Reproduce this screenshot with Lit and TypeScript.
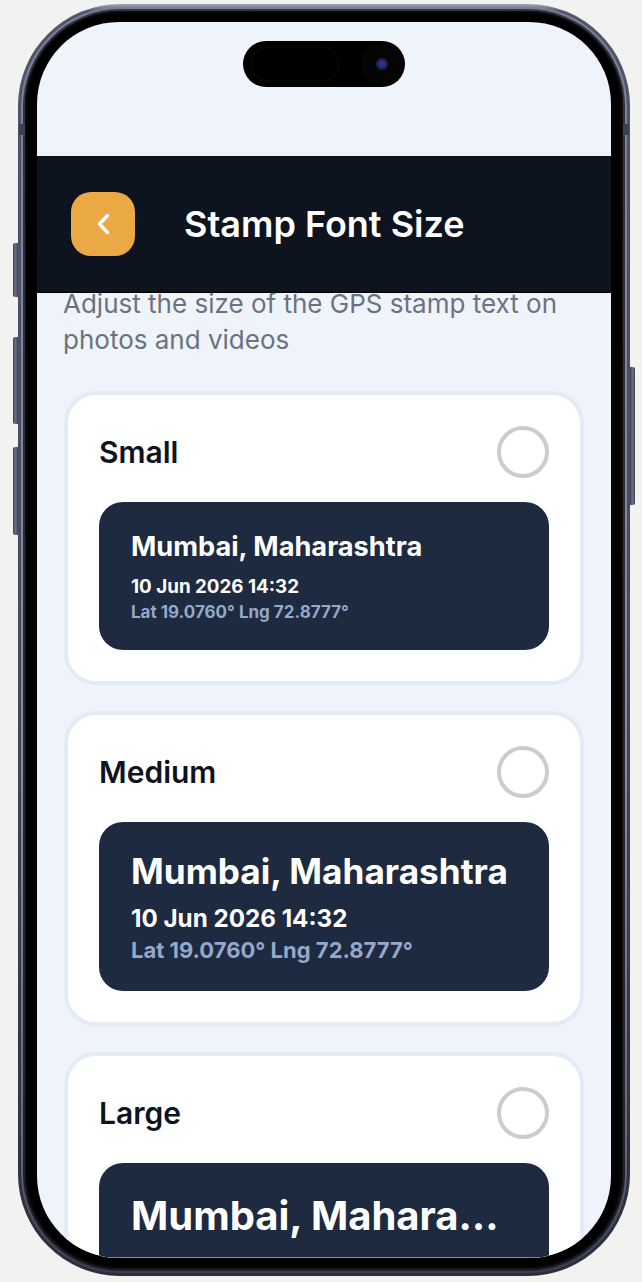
import { LitElement, html, css } from "lit";
import { customElement } from "lit/decorators.js";

const SIZES = [
  { label: "Small", cls: "s" },
  { label: "Medium", cls: "m" },
  { label: "Large", cls: "l" },
];

@customElement("app-root")
export class AppRoot extends LitElement {
  static styles = css`
    :host { display: block; width: 642px; height: 1282px; background: #f2f2f0; overflow: hidden; font-family: Inter, "Noto Sans", sans-serif; }
    .stage { box-sizing: border-box; height: 1282px; padding: 4px 12px 6px 18px; }
    .phone { position: relative; box-sizing: border-box; height: 1272px; padding: 3px; border-radius: 102px;
      background: linear-gradient(180deg, #a4a7b3 0, #50556a 0.6%, #454a5c 50%, #2a2e3d 100%); }
    .metal { box-sizing: border-box; height: 100%; padding: 2px; border-radius: 99px;
      background: linear-gradient(180deg, #7b8098 0, #858aa2 60%, #626779 90%, #3a3e4f 100%); }
    .metal2 { box-sizing: border-box; height: 100%; padding: 2px; border-radius: 97px; background: linear-gradient(180deg, #33363f, #282a33 50%, #1f2129); }
    .bezel { box-sizing: border-box; height: 100%; padding: 11px 12px 11px 12px; border-radius: 95px; background: #000; box-shadow: inset 0 0 3px 1px #16171b; }
    .screen { position: relative; height: 100%; border-radius: 82px; background: #eff4fb; overflow: hidden; display: flex; flex-direction: column; }
    .screen::after { content: ""; position: absolute; left: 60px; right: 60px; bottom: 0; height: 1px; background: #8b8f98; z-index: 3; }
    .btn { position: absolute; width: 5px; border-radius: 2px 0 0 2px; background: linear-gradient(90deg, #3b3f50, #6b7086 50%, #3f4355); }
    .b1 { left: -5px; top: 239px; height: 54px; }
    .b2 { left: -5px; top: 333px; height: 87px; }
    .b3 { left: -5px; top: 443px; height: 88px; }
    .b4 { right: -5px; top: 363px; height: 138px; border-radius: 0 2px 2px 0; }
    .band { position: absolute; width: 6px; height: 11px; background: #3c4152; top: 120px; }
    .band.l { left: 1px; } .band.r { right: 1px; }
    .island { position: absolute; left: 206px; top: 19px; width: 162px; height: 46px; border-radius: 23px; background: #000; display: flex; justify-content: space-between; align-items: center; padding: 0 2px 0 7px; box-sizing: border-box; z-index: 2; }
    .sensor { box-sizing: border-box; width: 90px; height: 36px; border-radius: 18px; border: 2px solid #070707; }
    .cam { width: 42px; height: 42px; border-radius: 50%; background: #050505; display: flex; align-items: center; justify-content: center; }
    .lens { width: 12px; height: 12px; border-radius: 50%; background: radial-gradient(circle, #3a35a0 0, #1b2a5a 50%, #05060f 100%); }
    .top { flex: none; height: 134px; }
    .header { flex: none; position: relative; z-index: 1; box-sizing: border-box; height: 137px; display: flex; align-items: center; gap: 49px; padding: 0 34px; background: #0e141f; border-bottom: 1px solid #000; }
    .back { width: 64px; height: 64px; border-radius: 20px; background: #eba945; display: flex; align-items: center; justify-content: center; }
    .back svg { width: 28px; height: 28px; fill: none; stroke: #fff; stroke-width: 3.5; stroke-linecap: round; stroke-linejoin: round; }
    h1 { margin: 0; color: #fff; font-size: 36px; font-weight: 600; letter-spacing: 0; }
    .body { flex: 1; min-height: 0; margin-top: -7px; padding: 0 27px; }
    .sub { margin: 0 0 33px -1px; color: #6b7280; font-size: 26px; line-height: 36px; font-weight: 400; }
    .card { box-sizing: border-box; margin-bottom: 26px; padding: 31px; background: #fff; border: 4px solid #e3ebf8; border-radius: 32px; }
    .row { display: flex; align-items: center; justify-content: space-between; margin-bottom: 24px; }
    .label { color: #0e141f; font-size: 30px; font-weight: 600; }
    .radio { box-sizing: border-box; width: 52px; height: 52px; border-radius: 50%; border: 4px solid #ccc; }
    .stamp { box-sizing: border-box; padding: 32px; border-radius: 24px; background: #1e2a40; }
    .name { color: #fff; font-weight: 700; white-space: nowrap; }
    .date { color: #fff; font-weight: 700; }
    .coord { color: #94a8c9; font-weight: 700; }
    .s .name { font-size: 27.2px; line-height: 26px; margin-bottom: 16px; }
    .s .date { font-size: 18.8px; line-height: 22px; }
    .s .coord { font-size: 17px; line-height: 28px; }
    .s.stamp { height: 148px; padding-top: 32px; }
    .m .name { font-size: 35.2px; line-height: 35px; margin-bottom: 16px; }
    .m .date { font-size: 24.2px; line-height: 28px; margin-bottom: 3px; }
    .m .coord { font-size: 22px; line-height: 28px; }
    .m.stamp { height: 169px; padding-top: 32px; }
    .l .name { font-size: 40px; line-height: 50px; margin-bottom: 20px; overflow: hidden; text-overflow: ellipsis; }
    .l .date { font-size: 28px; line-height: 34px; }
    .l .coord { font-size: 25px; line-height: 34px; }
    .l.stamp { padding-top: 28px; height: 200px; }
  `;

  render() {
    return html`
      <div class="stage">
        <div class="phone">
          <span class="btn b1"></span><span class="btn b2"></span><span class="btn b3"></span><span class="btn b4"></span>
          <div class="metal"><div class="metal2"><div class="bezel">
            <div class="screen">
              <div class="island"><span class="sensor"></span><span class="cam"><span class="lens"></span></span></div>
              <div class="top"></div>
              <div class="header">
                <div class="back"><svg viewBox="0 0 28 28"><path d="M18.5 5.5 10.5 14l8 8.5"/></svg></div>
                <h1>Stamp Font Size</h1>
              </div>
              <div class="body">
                <p class="sub">Adjust the size of the GPS stamp text on photos and videos</p>
                ${SIZES.map((s) => html`
                  <div class="card">
                    <div class="row"><span class="label">${s.label}</span><span class="radio"></span></div>
                    <div class="stamp ${s.cls}">
                      <div class="name">Mumbai, Maharashtra</div>
                      <div class="date">10 Jun 2026 14:32</div>
                      <div class="coord">Lat 19.0760° Lng 72.8777°</div>
                    </div>
                  </div>`)}
              </div>
            </div>
          </div></div></div>
          <span class="band l"></span><span class="band r"></span>
        </div>
      </div>
    `;
  }
}
